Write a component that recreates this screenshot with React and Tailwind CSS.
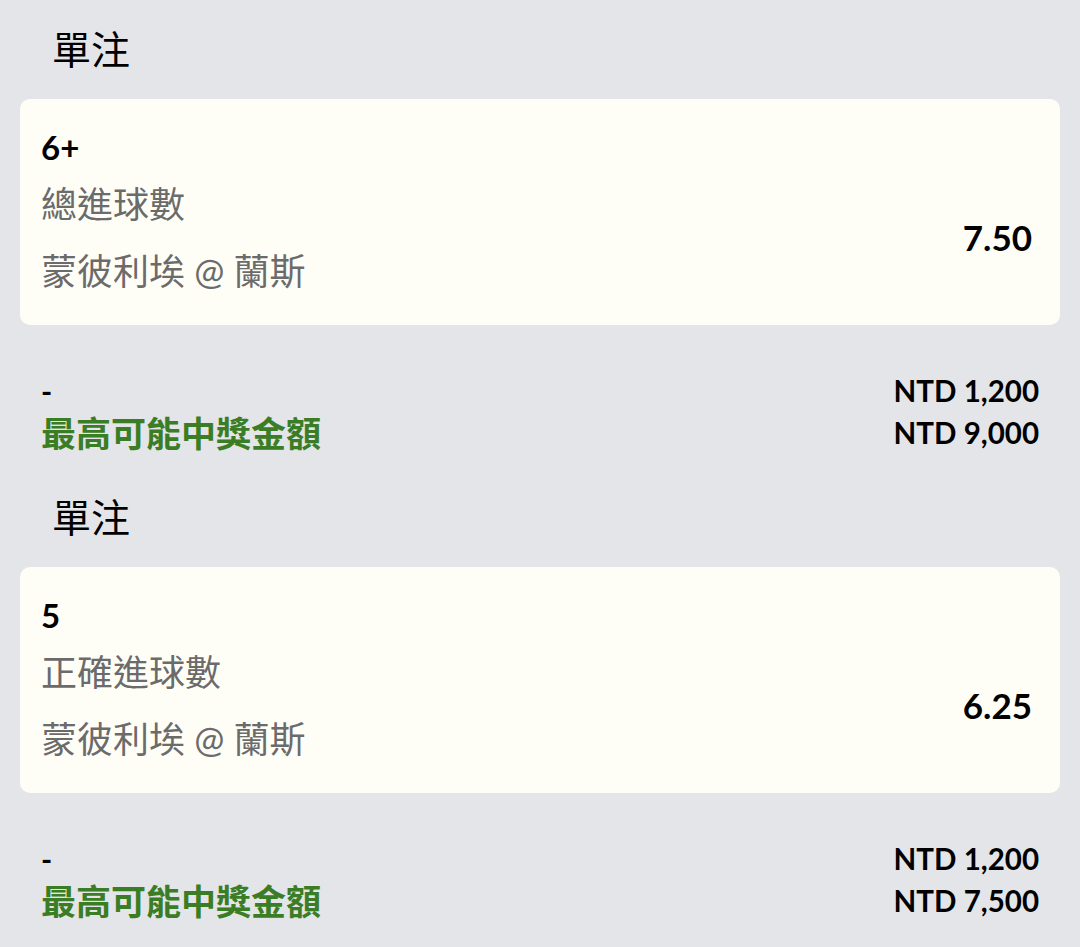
import React from "react";

const FONT = { fontFamily: 'Lato, "Noto Sans CJK TC", "Noto Sans", sans-serif' };

function Section({ pick, market, match, odds, stake, win }) {
  return (
    <div className="pb-[14px]">
      <div className="h-[99px] flex items-center pl-[32px] text-[39px] text-black leading-none">單注</div>
      <div className="bg-[#fffef6] rounded-[10px] pl-[21px] pr-[28px] pt-[30px] pb-[30px]">
        <div className="text-[33px] leading-[36px] font-bold text-black">{pick}</div>
        <div className="flex items-center justify-between mt-[15px]">
          <div className="flex flex-col gap-[19px] text-[36px] leading-[48px] text-[#6b6b6b]">
            <div>{market}</div>
            <div>{match}</div>
          </div>
          <div className="text-[35px] font-bold text-black leading-none">{odds}</div>
        </div>
      </div>
      <div className="mt-[45px] pl-[21px] pr-[21px] flex justify-between">
        <div className="flex flex-col">
          <div className="h-[42px] flex items-center text-[30px] font-bold text-black leading-none">-</div>
          <div className="h-[42px] flex items-center text-[35px] font-bold text-[#3b7d24] leading-none">最高可能中獎金額</div>
        </div>
        <div className="flex flex-col items-end">
          <div className="h-[42px] flex items-center text-[29.5px] font-bold text-black leading-none">NTD {stake}</div>
          <div className="h-[42px] flex items-center text-[29.5px] font-bold text-black leading-none">NTD {win}</div>
        </div>
      </div>
    </div>
  );
}

export default function App() {
  return (
    <div className="w-[1080px] h-[947px] overflow-hidden bg-[#e4e5e9] px-[20px]" style={FONT}>
      <Section pick="6+" market="總進球數" match="蒙彼利埃 @ 蘭斯" odds="7.50" stake="1,200" win="9,000" />
      <Section pick="5" market="正確進球數" match="蒙彼利埃 @ 蘭斯" odds="6.25" stake="1,200" win="7,500" />
    </div>
  );
}
